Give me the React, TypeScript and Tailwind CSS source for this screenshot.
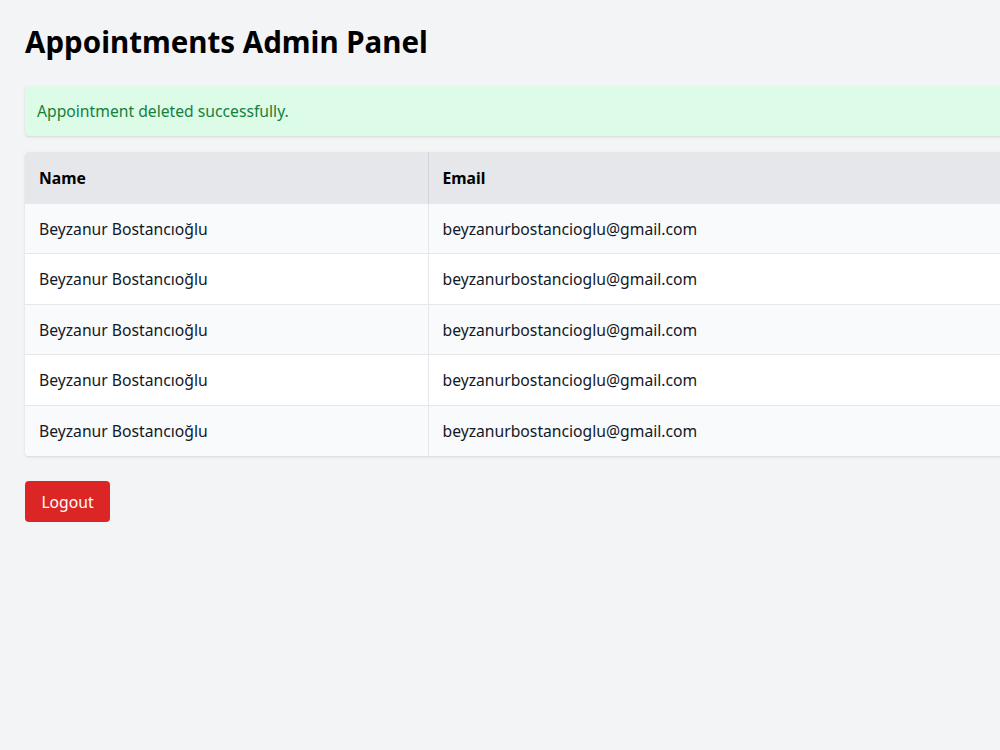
import React from "react";

const rows = Array.from({ length: 5 }, () => ({
  name: "Beyzanur Bostancıoğlu",
  email: "beyzanurbostancioglu@gmail.com",
}));

export default function App() {
  return (
    <div
      className="min-h-[750px] w-[1000px] overflow-hidden bg-[#f3f4f6] py-6 pl-[25px] text-[#111827]"
      style={{ fontFamily: '"Noto Sans", "Open Sans", sans-serif' }}
    >
      <h1 className="mb-[26px] text-[29.5px] font-bold leading-9 text-black">
        Appointments Admin Panel
      </h1>
      <div className="mb-4 w-[1000px] rounded bg-[#dcfce7] px-3 py-[13px] text-[15.7px] leading-6 text-[#15803d] shadow">
        Appointment deleted successfully.
      </div>
      <div className="w-[1200px] overflow-hidden rounded shadow">
        <table className="w-full border-collapse bg-white text-[15.7px]">
          <thead>
            <tr className="h-[51px] bg-[#e5e7eb] text-left">
              <th className="w-[403px] border-r border-[#d1d5db] px-[14px] pt-[3px] font-bold text-black">
                Name
              </th>
              <th className="px-[14px] pt-[3px] font-bold text-black">Email</th>
            </tr>
          </thead>
          <tbody>
            {rows.map((r, i) => (
              <tr
                key={i}
                className={`h-[50.5px] border-t border-[#e5e7eb] ${
                  i % 2 === 0 ? "bg-[#f9fafb]" : "bg-white"
                }`}
              >
                <td className="border-r border-[#e5e7eb] px-[14px] pt-[3px]">{r.name}</td>
                <td className="px-[14px] pt-[3px]">{r.email}</td>
              </tr>
            ))}
          </tbody>
        </table>
      </div>
      <button className="mt-[25px] h-[41px] w-[85px] rounded bg-[#dc2626] pt-[3px] text-[15.7px] text-white">
        Logout
      </button>
    </div>
  );
}
